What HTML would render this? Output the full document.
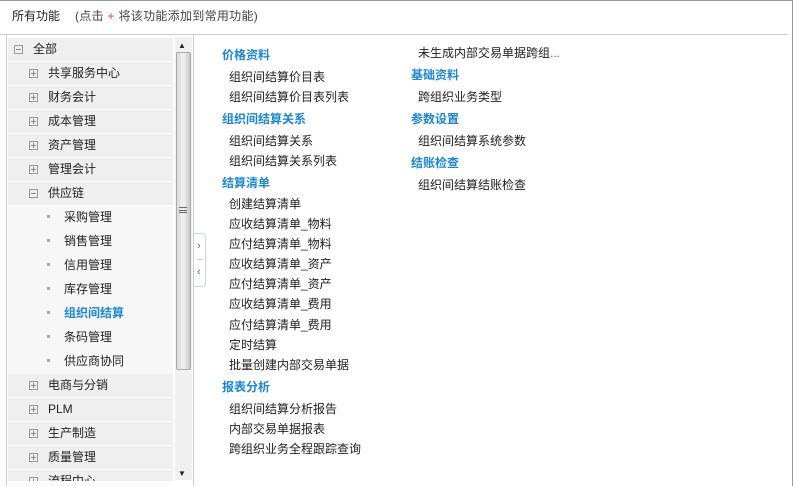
<!DOCTYPE html><html><head><meta charset="utf-8"><style>
*{margin:0;padding:0;box-sizing:border-box}
html,body{overflow:hidden}
body{width:793px;height:486px;background:#fff;position:relative;overflow:hidden;font-family:"Liberation Sans","Noto Sans CJK SC",sans-serif;font-size:12px;color:#222}
.a{position:absolute;white-space:nowrap;line-height:16px}
.row{position:absolute;left:8px;width:165px;height:23px;background:#efefef}
.sub{background:#f7f7f7}
.box{position:absolute;width:9px;height:9px;border:1px solid #999;}
.box:before{content:"";position:absolute;left:1px;top:3px;width:5px;height:1px;background:#888}
.box.p:after{content:"";position:absolute;left:3px;top:1px;width:1px;height:5px;background:#888}
.dot{position:absolute;width:3px;height:3px;background:#aaa}
.h{color:#1a86d8;font-weight:bold}
</style></head><body>
<div style="position:absolute;left:0;top:0;width:793px;height:1px;background:#999"></div>
<div style="position:absolute;right:0;top:0;width:1px;height:486px;background:#999"></div>
<div class="a" style="left:12px;top:8px">所有功能</div>
<div class="a" style="left:75px;top:8px;color:#444;letter-spacing:0.3px">(点击 <span style="color:#e35">+</span> 将该功能添加到常用功能)</div>
<div style="position:absolute;left:0;top:34px;width:788px;height:1px;background:#ccc"></div>
<div style="position:absolute;left:6px;top:35px;width:1px;height:451px;background:#ccc"></div>
<div style="position:absolute;left:193px;top:35px;width:1px;height:451px;background:#ccc"></div>
<!-- tree -->
<div class="row" style="top:38px"></div><div class="box" style="left:14px;top:45px"></div><div class="a" style="left:33px;top:41px">全部</div>
<div class="row" style="top:62px"></div><div class="box p" style="left:29px;top:69px"></div><div class="a" style="left:48px;top:65px">共享服务中心</div>
<div class="row" style="top:86px"></div><div class="box p" style="left:29px;top:93px"></div><div class="a" style="left:48px;top:89px">财务会计</div>
<div class="row" style="top:110px"></div><div class="box p" style="left:29px;top:117px"></div><div class="a" style="left:48px;top:113px">成本管理</div>
<div class="row" style="top:134px"></div><div class="box p" style="left:29px;top:141px"></div><div class="a" style="left:48px;top:137px">资产管理</div>
<div class="row" style="top:158px"></div><div class="box p" style="left:29px;top:165px"></div><div class="a" style="left:48px;top:161px">管理会计</div>
<div class="row" style="top:182px"></div><div class="box" style="left:29px;top:189px"></div><div class="a" style="left:48px;top:185px">供应链</div>
<div class="row sub" style="top:206px;height:168px"></div>
<div class="dot" style="left:47px;top:215px"></div><div class="a" style="left:64px;top:209px">采购管理</div>
<div class="dot" style="left:47px;top:239px"></div><div class="a" style="left:64px;top:233px">销售管理</div>
<div class="dot" style="left:47px;top:263px"></div><div class="a" style="left:64px;top:257px">信用管理</div>
<div class="dot" style="left:47px;top:287px"></div><div class="a" style="left:64px;top:281px">库存管理</div>
<div class="dot" style="left:47px;top:311px"></div><div class="a h" style="left:64px;top:305px">组织间结算</div>
<div class="dot" style="left:47px;top:335px"></div><div class="a" style="left:64px;top:329px">条码管理</div>
<div class="dot" style="left:47px;top:359px"></div><div class="a" style="left:64px;top:353px">供应商协同</div>
<div class="row" style="top:374px"></div><div class="box p" style="left:29px;top:381px"></div><div class="a" style="left:48px;top:377px">电商与分销</div>
<div class="row" style="top:398px"></div><div class="box p" style="left:29px;top:405px"></div><div class="a" style="left:48px;top:401px">PLM</div>
<div class="row" style="top:422px"></div><div class="box p" style="left:29px;top:429px"></div><div class="a" style="left:48px;top:425px">生产制造</div>
<div class="row" style="top:446px"></div><div class="box p" style="left:29px;top:453px"></div><div class="a" style="left:48px;top:449px">质量管理</div>
<div style="position:absolute;left:8px;top:470px;width:165px;height:11px;background:#efefef;overflow:hidden">
<div class="box p" style="left:21px;top:7px"></div><div class="a" style="left:40px;top:3px">流程中心</div></div>
<!-- scrollbar -->
<div style="position:absolute;left:175px;top:37px;width:17px;height:443px;background:#f0f0f0"></div>
<div class="a" style="left:178px;top:38px;font-size:8px">▲</div>
<div class="a" style="left:178px;top:466px;font-size:8px">▼</div>
<div style="position:absolute;left:176px;top:52px;width:15px;height:318px;background:linear-gradient(90deg,#d8d8d8,#f2f2f2,#c8c8c8);border:1px solid #aaa;border-radius:2px"></div>
<div style="position:absolute;left:179px;top:207px;width:8px;height:6px;border-top:1px solid #666;border-bottom:1px solid #666"></div>
<div style="position:absolute;left:179px;top:210px;width:8px;height:1px;background:#666"></div>
<!-- toggle -->
<div style="position:absolute;left:194px;top:233px;width:12px;height:54px;border:1px solid #bcdcf3;border-left:none;border-radius:0 4px 4px 0;background:#fff"></div>
<div class="a" style="left:197px;top:238px;color:#666;font-size:11px">›</div>
<div style="position:absolute;left:197px;top:259px;width:6px;height:1px;background:#ccc"></div>
<div class="a" style="left:197px;top:264px;color:#666;font-size:11px">‹</div>
<!-- col1 -->
<div class="a h" style="left:222px;top:47px">价格资料</div>
<div class="a" style="left:229px;top:69px">组织间结算价目表</div>
<div class="a" style="left:229px;top:89px">组织间结算价目表列表</div>
<div class="a h" style="left:222px;top:111px">组织间结算关系</div>
<div class="a" style="left:229px;top:133px">组织间结算关系</div>
<div class="a" style="left:229px;top:153px">组织间结算关系列表</div>
<div class="a h" style="left:222px;top:175px">结算清单</div>
<div class="a" style="left:229px;top:196px">创建结算清单</div>
<div class="a" style="left:229px;top:216px">应收结算清单_物料</div>
<div class="a" style="left:229px;top:236px">应付结算清单_物料</div>
<div class="a" style="left:229px;top:256px">应收结算清单_资产</div>
<div class="a" style="left:229px;top:276px">应付结算清单_资产</div>
<div class="a" style="left:229px;top:296px">应收结算清单_费用</div>
<div class="a" style="left:229px;top:317px">应付结算清单_费用</div>
<div class="a" style="left:229px;top:337px">定时结算</div>
<div class="a" style="left:229px;top:357px">批量创建内部交易单据</div>
<div class="a h" style="left:222px;top:379px">报表分析</div>
<div class="a" style="left:229px;top:401px">组织间结算分析报告</div>
<div class="a" style="left:229px;top:421px">内部交易单据报表</div>
<div class="a" style="left:229px;top:441px">跨组织业务全程跟踪查询</div>
<!-- col2 -->
<div class="a" style="left:418px;top:45px">未生成内部交易单据跨组<span style="color:#a60">...</span></div>
<div class="a h" style="left:411px;top:67px">基础资料</div>
<div class="a" style="left:418px;top:89px">跨组织业务类型</div>
<div class="a h" style="left:411px;top:111px">参数设置</div>
<div class="a" style="left:418px;top:133px">组织间结算系统参数</div>
<div class="a h" style="left:411px;top:155px">结账检查</div>
<div class="a" style="left:418px;top:177px">组织间结算结账检查</div>
</body></html>
